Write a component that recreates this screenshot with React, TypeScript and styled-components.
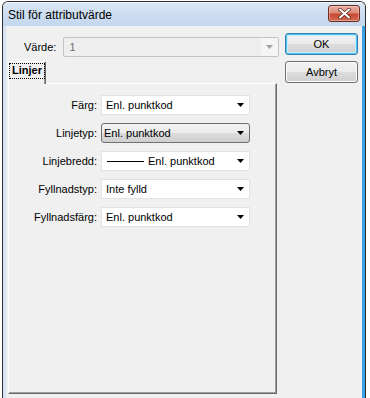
import styled, { createGlobalStyle } from 'styled-components';

const GlobalStyle = createGlobalStyle`
  html, body {
    margin: 0;
    padding: 0;
    background: #ffffff;
    overflow: hidden;
  }
  body {
    font-family: 'Liberation Sans', Arial, sans-serif;
    font-size: 11px;
    color: #000;
  }
`;

const rows = [
  { label: 'Färg:', value: 'Enl. punktkod' },
  { label: 'Linjetyp:', value: 'Enl. punktkod', focused: true },
  { label: 'Linjebredd:', value: 'Enl. punktkod', line: true },
  { label: 'Fyllnadstyp:', value: 'Inte fylld' },
  { label: 'Fyllnadsfärg:', value: 'Enl. punktkod' },
];

const Arrow = ({ color = '#000' }: { color?: string }) => (
  <svg width='7' height='4' viewBox='0 0 7 4'>
    <polygon points='0,0 7,0 3.5,4' fill={color} />
  </svg>
);

const CloseIcon = () => (
  <svg width='13' height='11' viewBox='0 0 13 11'>
    <path
      d='M2 1.5 L11 9.5 M11 1.5 L2 9.5'
      stroke='#5a2a22'
      strokeWidth='3.6'
      strokeLinecap='round'
    />
    <path
      d='M2 1.5 L11 9.5 M11 1.5 L2 9.5'
      stroke='#ffffff'
      strokeWidth='2'
      strokeLinecap='round'
    />
  </svg>
);

const App = () => {
  return (
    <>
      <GlobalStyle />
      <Window>
        <TitleBar>
          <Title>Stil för attributvärde</Title>
          <CloseButton>
            <CloseIcon />
          </CloseButton>
        </TitleBar>
        <Frame>
          <Client>
            <LeftColumn>
              <ValueRow>
                <ValueLabel>Värde:</ValueLabel>
                <DisabledCombo>
                  <DisabledText>1</DisabledText>
                  <DisabledButton>
                    <Arrow color='#a3a3a3' />
                  </DisabledButton>
                </DisabledCombo>
              </ValueRow>
              <TabStrip>
                <Tab>
                  <FocusText>Linjer</FocusText>
                </Tab>
              </TabStrip>
              <Panel>
                <FieldGrid>
                  {rows.map(row => (
                    <Field key={row.label}>
                      <FieldLabel>{row.label}</FieldLabel>
                      <Select $focused={!!row.focused}>
                        <SelectValue>
                          {row.line && <LineSample />}
                          {row.value}
                        </SelectValue>
                        <Arrow />
                      </Select>
                    </Field>
                  ))}
                </FieldGrid>
              </Panel>
            </LeftColumn>
            <ButtonColumn>
              <DialogButton $default>OK</DialogButton>
              <DialogButton>Avbryt</DialogButton>
            </ButtonColumn>
          </Client>
        </Frame>
      </Window>
    </>
  );
};

const Window = styled.div`
  margin: 1px 0 0 2px;
  width: 364px;
  height: 397px;
  box-sizing: border-box;
  border: 1px solid #2e2e2e;
  border-bottom: none;
  border-radius: 6px 6px 0 0;
  overflow: hidden;
  display: flex;
  flex-direction: column;
  background: #cddff2;
`;

const TitleBar = styled.div`
  height: 24px;
  flex: none;
  display: flex;
  align-items: flex-start;
  justify-content: space-between;
  background: linear-gradient(180deg, #dae7f5 0%, #cadcf0 60%, #c3d7ee 100%);
  border-top: 1px solid #f4f8fc;
  box-sizing: border-box;
`;

const Title = styled.div`
  font-size: 12px;
  line-height: 14px;
  margin: 5px 0 0 5px;
  color: #000;
`;

const CloseButton = styled.div`
  width: 32px;
  height: 17px;
  margin: 2px 5px 0 0;
  box-sizing: border-box;
  border: 1px solid #6b2b20;
  border-radius: 3px;
  display: flex;
  align-items: center;
  justify-content: center;
  background: linear-gradient(
    180deg,
    #e9ada0 0%,
    #dc8a78 45%,
    #c9472f 55%,
    #d06a52 100%
  );
  box-shadow: inset 0 0 0 1px rgba(255, 220, 210, 0.45);
`;

const Frame = styled.div`
  flex: 1;
  display: flex;
  padding: 0 3px;
  background: linear-gradient(
    90deg,
    #dbe8f6 0,
    #cfe0f2 3px,
    #c6daef calc(100% - 4px),
    #3c9fe0 calc(100% - 3px),
    #3c9fe0 100%
  );
`;

const Client = styled.div`
  flex: 1;
  display: flex;
  align-items: flex-start;
  gap: 5px;
  padding: 0 4px 0 2px;
  background: #f0f0f0;
`;

const LeftColumn = styled.div`
  width: 272px;
  display: flex;
  flex-direction: column;
`;

const ValueRow = styled.div`
  display: flex;
  align-items: center;
  gap: 7px;
  margin-top: 11px;
  padding-left: 16px;
`;

const ValueLabel = styled.span`
  line-height: 13px;
`;

const DisabledCombo = styled.div`
  width: 216px;
  height: 20px;
  box-sizing: border-box;
  border: 1px solid #c3c3c3;
  border-radius: 2px;
  display: flex;
  align-items: stretch;
  background: #eeeeee;
`;

const DisabledText = styled.div`
  flex: 1;
  display: flex;
  align-items: center;
  padding-left: 5px;
  color: #6d6d6d;
`;

const DisabledButton = styled.div`
  width: 17px;
  display: flex;
  align-items: center;
  justify-content: center;
  background: #f5f5f5;
`;

const TabStrip = styled.div`
  display: flex;
  margin-top: 4px;
`;

const Tab = styled.div`
  position: relative;
  z-index: 1;
  width: 38px;
  height: 23px;
  margin-bottom: -1px;
  box-sizing: border-box;
  border-top: 1px solid #ffffff;
  border-left: 1px solid #ffffff;
  border-right: 1px solid #696969;
  box-shadow: inset -1px 0 0 #a0a0a0;
  border-radius: 2px 2px 0 0;
  background: #f0f0f0;
  padding: 1px 0 0 1px;
`;

const FocusText = styled.span`
  display: inline-block;
  font-weight: 700;
  line-height: 11px;
  padding: 0 1px 1px 1px;
  outline: 1px dotted #000;
  outline-offset: 0;
  margin-top: 1px;
  border: 1px solid transparent;
`;

const Panel = styled.div`
  width: 269px;
  height: 311px;
  box-sizing: border-box;
  border-top: 1px solid #ffffff;
  border-left: 1px solid #ffffff;
  border-right: 1px solid #696969;
  border-bottom: 1px solid #696969;
  box-shadow: inset -1px -1px 0 #a0a0a0;
  padding-top: 11px;
`;

const FieldGrid = styled.div`
  display: flex;
  flex-direction: column;
  gap: 8px;
`;

const Field = styled.div`
  display: grid;
  grid-template-columns: 88px 149px;
  column-gap: 4px;
  align-items: center;
`;

const FieldLabel = styled.span`
  text-align: right;
  line-height: 13px;
`;

const Select = styled.div<{ $focused: boolean }>`
  height: 20px;
  box-sizing: border-box;
  display: flex;
  align-items: center;
  justify-content: space-between;
  padding: 0 5px 0 ${p => (p.$focused ? '2px' : '4px')};
  border: 1px solid ${p => (p.$focused ? '#707070' : '#e2e2e2')};
  border-radius: ${p => (p.$focused ? '3px' : '0')};
  background: ${p =>
    p.$focused
      ? 'linear-gradient(180deg, #f2f2f2 0%, #ebebeb 50%, #dddddd 50%, #cfcfcf 100%)'
      : '#ffffff'};
`;

const SelectValue = styled.span`
  display: flex;
  align-items: center;
  line-height: 13px;
`;

const LineSample = styled.span`
  display: inline-block;
  width: 37px;
  height: 1px;
  background: #000;
  margin: 0 4px 0 1px;
`;

const ButtonColumn = styled.div`
  width: 73px;
  display: flex;
  flex-direction: column;
  gap: 6px;
  margin-top: 7px;
`;

const DialogButton = styled.div<{ $default?: boolean }>`
  height: 22px;
  box-sizing: border-box;
  display: flex;
  align-items: center;
  justify-content: center;
  border: 1px solid ${p => (p.$default ? '#3c7fb1' : '#707070')};
  border-radius: 3px;
  background: linear-gradient(
    180deg,
    #f2f2f2 0%,
    #ebebeb 50%,
    #dddddd 50%,
    #cfcfcf 100%
  );
  box-shadow: ${p =>
    p.$default
      ? 'inset 0 0 0 1px #48c4f2, inset 0 0 0 2px #c8ecfb'
      : 'inset 0 0 0 1px #fcfcfc'};
`;

export default App;
